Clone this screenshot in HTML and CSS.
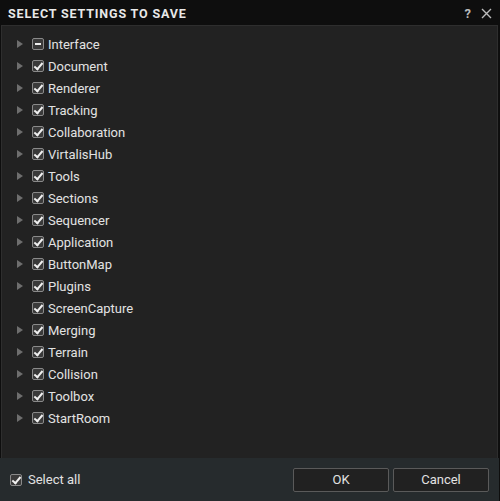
FILE: index.html
```html
<!DOCTYPE html>
<html>
<head>
<meta charset="utf-8">
<link rel="stylesheet" href="styles.css">
</head>
<body>
<div class="dialog">
  <div class="titlebar">
    <span class="title">SELECT SETTINGS TO SAVE</span>
    <div class="tools">
      <span class="help">?</span>
      <svg class="close" width="11" height="11" viewBox="0 0 11 11"><path d="M1 1L10 10M10 1L1 10" stroke="#bbb" stroke-width="1.4" fill="none"/></svg>
    </div>
  </div>
  <div class="content">
    <ul class="tree">
      <li class="row"><span class="arrow"></span><span class="cb partial"></span><span class="label">Interface</span></li>
      <li class="row"><span class="arrow"></span><span class="cb checked"></span><span class="label">Document</span></li>
      <li class="row"><span class="arrow"></span><span class="cb checked"></span><span class="label">Renderer</span></li>
      <li class="row"><span class="arrow"></span><span class="cb checked"></span><span class="label">Tracking</span></li>
      <li class="row"><span class="arrow"></span><span class="cb checked"></span><span class="label">Collaboration</span></li>
      <li class="row"><span class="arrow"></span><span class="cb checked"></span><span class="label">VirtalisHub</span></li>
      <li class="row"><span class="arrow"></span><span class="cb checked"></span><span class="label">Tools</span></li>
      <li class="row"><span class="arrow"></span><span class="cb checked"></span><span class="label">Sections</span></li>
      <li class="row"><span class="arrow"></span><span class="cb checked"></span><span class="label">Sequencer</span></li>
      <li class="row"><span class="arrow"></span><span class="cb checked"></span><span class="label">Application</span></li>
      <li class="row"><span class="arrow"></span><span class="cb checked"></span><span class="label">ButtonMap</span></li>
      <li class="row"><span class="arrow"></span><span class="cb checked"></span><span class="label">Plugins</span></li>
      <li class="row"><span class="arrow none"></span><span class="cb checked"></span><span class="label">ScreenCapture</span></li>
      <li class="row"><span class="arrow"></span><span class="cb checked"></span><span class="label">Merging</span></li>
      <li class="row"><span class="arrow"></span><span class="cb checked"></span><span class="label">Terrain</span></li>
      <li class="row"><span class="arrow"></span><span class="cb checked"></span><span class="label">Collision</span></li>
      <li class="row"><span class="arrow"></span><span class="cb checked"></span><span class="label">Toolbox</span></li>
      <li class="row"><span class="arrow"></span><span class="cb checked"></span><span class="label">StartRoom</span></li>
    </ul>
  </div>
  <div class="footer">
    <label class="selectall"><span class="cb checked"></span><span class="label">Select all</span></label>
    <div class="buttons">
      <button class="btn">OK</button>
      <button class="btn">Cancel</button>
    </div>
  </div>
</div>
</body>
</html>
```
FILE: styles.css
```css
html, body {
  margin: 0;
  padding: 0;
  background: #0e0e0e;
}
body {
  width: 500px;
  height: 501px;
  overflow: hidden;
  font-family: Roboto, "Liberation Sans", sans-serif;
}
.dialog {
  display: flex;
  flex-direction: column;
  width: 500px;
  height: 501px;
  background: #0e0e0e;
}
.titlebar {
  height: 25px;
  display: flex;
  align-items: center;
  justify-content: space-between;
  padding: 0 8px 0 8px;
  box-sizing: border-box;
}
.title {
  color: #e8e8e8;
  font-weight: bold;
  font-size: 12.5px;
  letter-spacing: 0.85px;
  padding-top: 2px;
}
.tools {
  display: flex;
  align-items: center;
  gap: 10px;
  padding-top: 1px;
}
.help {
  color: #bbb;
  font-weight: bold;
  font-size: 13px;
}
.close {
  display: block;
}
.content {
  flex: 1;
  margin: 0 2px 0 1px;
  background: #222222;
  border: 1px solid #2e2e2e;
  border-bottom: none;
}
.tree {
  list-style: none;
  margin: 0;
  padding: 7px 0 0 0;
}
.row {
  height: 22px;
  display: flex;
  align-items: center;
}
.arrow {
  width: 0;
  height: 0;
  margin-left: 15px;
  border-left: 6px solid #6e6e6e;
  border-top: 4px solid transparent;
  border-bottom: 4px solid transparent;
}
.arrow.none {
  border-left-color: transparent;
}
.cb {
  position: relative;
  width: 10px;
  height: 10px;
  border: 1px solid #8a8a8a;
  border-radius: 2px;
  background: #3a3a3a;
  flex: none;
}
.row .cb {
  margin-left: 9px;
}
.cb.checked::after {
  content: "";
  position: absolute;
  left: 3px;
  top: 0px;
  width: 3px;
  height: 7px;
  border-right: 2px solid #f0f0f0;
  border-bottom: 2px solid #f0f0f0;
  transform: rotate(40deg);
}
.cb.partial::after {
  content: "";
  position: absolute;
  left: 2px;
  top: 4px;
  width: 6px;
  height: 2px;
  background: #f0f0f0;
}
.label {
  color: #e2e2e2;
  font-size: 13px;
  margin-left: 4px;
}
.footer {
  height: 43px;
  background: #262b2d;
  display: flex;
  align-items: center;
  justify-content: space-between;
  padding: 0 10px 0 10px;
  margin-right: 1px;
}
.selectall {
  display: flex;
  align-items: center;
}
.selectall .label {
  margin-left: 6px;
}
.buttons {
  display: flex;
  gap: 4px;
}
.btn {
  width: 96px;
  height: 24px;
  background: #212121;
  border: 1px solid #5a5a5a;
  border-radius: 2px;
  color: #e2e2e2;
  font-family: Roboto, "Liberation Sans", sans-serif;
  font-size: 13px;
  padding: 0;
}
```
